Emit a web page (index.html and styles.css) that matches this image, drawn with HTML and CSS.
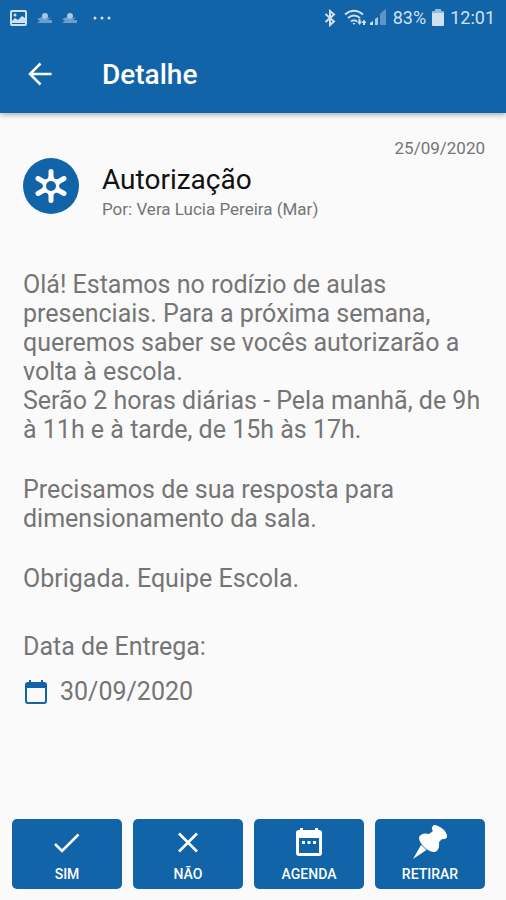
FILE: index.html
```
<!DOCTYPE html>
<html lang="pt-BR">
<head>
    <meta charset="UTF-8">
    <meta name="viewport" content="width=device-width, initial-scale=1.0">
    <title>Detalhe</title>
    <link rel="stylesheet" href="styles.css">
</head>
<body>
    <header class="topbar">
        <div class="status">
            <div class="status-left">
                <svg width="18" height="16" viewBox="0 0 18 16">
                    <rect x="1" y="1" width="15" height="14" rx="1" fill="none" stroke="currentColor" stroke-width="2"/>
                    <circle cx="5" cy="5" r="1.5" fill="currentColor"/>
                    <path d="M2 13V11L5 8L8 10L12 6L15 8V13Z" fill="currentColor"/>
                </svg>
                <svg class="dim" width="17" height="12" viewBox="0 0 17 12">
                    <circle cx="9" cy="4" r="3" fill="currentColor"/>
                    <path d="M1 7L6 5L9 7L15 5L12 8H16V11H1L4 9Z" fill="currentColor" opacity="0.6"/>
                </svg>
                <svg class="dim" width="17" height="12" viewBox="0 0 17 12">
                    <circle cx="9" cy="4" r="3" fill="currentColor"/>
                    <path d="M1 7L6 5L9 7L15 5L12 8H16V11H1L4 9Z" fill="currentColor" opacity="0.6"/>
                </svg>
                <svg class="more" width="18" height="4" viewBox="0 0 18 4" fill="currentColor">
                    <circle cx="2" cy="2" r="1.5"/>
                    <circle cx="9" cy="2" r="1.5"/>
                    <circle cx="16" cy="2" r="1.5"/>
                </svg>
            </div>
            <div class="status-right">
                <svg width="12" height="18" viewBox="0 0 12 18" fill="none" stroke="currentColor" stroke-width="2">
                    <path d="M1.500 5L10 12.500L6 16V2L10 5.500L1.500 13"/>
                </svg>
                <svg class="wifi" width="23" height="18" viewBox="0 0 23 18" fill="none" stroke="currentColor" stroke-width="2">
                    <path d="M1 5.500Q10 -2 19 5.500"/>
                    <path d="M4 9Q10 4 16 9"/>
                    <path d="M7 12.500Q10 10 13 12.500"/>
                    <path d="M8.500 14H11.500L10 16Z" fill="currentColor" stroke="none"/>
                    <path d="M15.500 10V13M20 16V13" stroke-width="2"/>
                    <path d="M13 12.500H18L15.500 16ZM17.500 14L20 10.500L22.500 14Z" fill="currentColor" stroke="none"/>
                </svg>
                <svg width="18" height="17" viewBox="0 0 18 17" fill="currentColor">
                    <path d="M1 16V14L4 12V16Z"/>
                    <path d="M6 16V10L9 8V16Z" opacity="0.8"/>
                    <path d="M11 16V5L13 3V16ZM13 16V3L17 0V16Z" opacity="0.4"/>
                </svg>
                <span class="charge">83%</span>
                <svg class="battery" width="12" height="17" viewBox="0 0 12 17" fill="currentColor">
                    <path d="M3 0H9V2H11Q12 2 12 3V4H0V3Q0 2 1 2H3Z" opacity="0.7"/>
                    <path d="M0 4H12V16Q12 17 11 17H1Q0 17 0 16Z"/>
                </svg>
                <span class="clock">12:01</span>
            </div>
        </div>
        <div class="title-row">
            <button type="button" class="back" aria-label="Voltar">
                <svg width="24" height="24" viewBox="0 0 24 24" fill="none" stroke="currentColor" stroke-width="2.5">
                    <path d="M12.500 1.500L2 12L12.500 22.500M2 12H23.500"/>
                </svg>
            </button>
            <h1>Detalhe</h1>
        </div>
    </header>

    <main class="content">
        <time class="date" datetime="2020-09-25">25/09/2020</time>
        <div class="sender">
            <div class="avatar">
                <svg width="34" height="36" viewBox="-17 -18 34 36">
                    <g stroke="currentColor" stroke-width="5" stroke-linecap="round">
                        <path d="M0 -14.500V14.500M-13 -7.500L13 7.500M-13 7.500L13 -7.500"/>
                    </g>
                    <path d="M0 -12L4 -7L10 -6L8 0L10 6L4 7L0 12L-4 7L-10 6L-8 0L-10 -6L-4 -7Z" fill="currentColor"/>
                    <circle class="hub" r="5"/>
                </svg>
            </div>
            <div class="sender-text">
                <h2>Autorização</h2>
                <p class="author">Por: Vera Lucia Pereira (Mar)</p>
            </div>
        </div>
        <div class="message">
            <p>Olá! Estamos no rodízio de aulas presenciais. Para a próxima semana, queremos saber se vocês autorizarão a volta à escola.<br>Serão 2 horas diárias - Pela manhã, de 9h à 11h e à tarde, de 15h às 17h.</p>
            <p>Precisamos de sua resposta para dimensionamento da sala.</p>
            <p>Obrigada. Equipe Escola.</p>
        </div>
        <div class="delivery">
            <p>Data de Entrega:</p>
            <div class="delivery-date">
                <svg width="22" height="24" viewBox="0 0 22 24">
                    <rect x="1" y="3" width="20" height="20" rx="2" fill="none" stroke="currentColor" stroke-width="2"/>
                    <path d="M1 3H21V8H1ZM4 0H6V4H4ZM16 0H18V4H16Z" fill="currentColor"/>
                </svg>
                <time datetime="2020-09-30">30/09/2020</time>
            </div>
        </div>
    </main>

    <footer class="actions">
        <button type="button">
            <svg width="34" height="34" viewBox="0 0 34 34" fill="none" stroke="currentColor" stroke-width="2.5">
                <path d="M5 19L12 26L28.500 9.500"/>
            </svg>
            SIM
        </button>
        <button type="button">
            <svg width="34" height="34" viewBox="0 0 34 34" fill="none" stroke="currentColor" stroke-width="2.5">
                <path d="M8 8.500L26 26.500M26 8.500L8 26.500"/>
            </svg>
            NÃO
        </button>
        <button type="button">
            <svg width="34" height="34" viewBox="0 0 34 34">
                <rect x="5.500" y="6.500" width="23" height="23" rx="1.5" fill="none" stroke="currentColor" stroke-width="3"/>
                <path d="M5 6H29V13H5ZM8 3H11V7H8ZM23 3H26V7H23ZM10 16H13V19H10ZM15.500 16H18.500V19H15.500ZM21 16H24V19H21Z" fill="currentColor"/>
            </svg>
            AGENDA
        </button>
        <button type="button">
            <svg width="34" height="34" viewBox="0 0 34 34" fill="currentColor">
                <path d="M19.500 1.500Q21 -1 25 1Q32 4 34 10Q35 15 29 14L26 17Q27 25 22 27Q16 27 11 22Q6 17 6 12Q9 7 16 9L20 6Q18 4 19.500 1.500Z"/>
                <path d="M8 20L13.500 25L0 34Z"/>
            </svg>
            RETIRAR
        </button>
    </footer>
</body>
</html>
```
FILE: styles.css
```
* {
    box-sizing: border-box;
}
body {
    font-family: Roboto, sans-serif;
    background-color: #fafafa;
    color: #757575;
    margin: 0;
    min-height: 100vh;
    display: flex;
    flex-direction: column;
}
h1, h2, p {
    margin: 0;
}
button {
    font-family: inherit;
    color: white;
    border: none;
    cursor: pointer;
}
svg {
    display: block;
    flex: none;
}
.topbar {
    background: #1164a8;
    color: white;
    height: 113px;
    box-shadow: 0 2px 5px rgba(0, 0, 0, 0.3);
}
.status {
    display: flex;
    justify-content: space-between;
    align-items: center;
    height: 35px;
    padding: 0 11px 0 10px;
    color: #cfe0ef;
}
.status-left, .status-right {
    display: flex;
    align-items: center;
}
.status-left {
    gap: 8px;
}
.dim {
    opacity: 0.8;
}
.more {
    margin-left: 7px;
}
.wifi {
    margin: 0 2px 0 8px;
}
.charge, .clock {
    font-size: 18px;
}
.charge {
    margin-left: 6px;
}
.battery {
    margin: 0 6px;
}
.title-row {
    display: flex;
    align-items: center;
    height: 78px;
    padding-left: 28px;
}
.back {
    background: none;
    padding: 0;
    margin-right: 50px;
}
h1 {
    font-size: 28px;
    font-weight: 500;
}
.content {
    padding: 25px 21px 20px 23px;
}
.date {
    display: block;
    text-align: right;
    font-size: 17px;
    line-height: 20px;
}
.sender {
    display: flex;
    align-items: flex-start;
    gap: 23px;
}
.avatar {
    display: flex;
    align-items: center;
    justify-content: center;
    width: 56px;
    height: 56px;
    border-radius: 50%;
    background: #1164a8;
    color: white;
}
.hub {
    fill: #1164a8;
}
.sender-text {
    padding-top: 4px;
}
h2 {
    font-size: 28px;
    font-weight: 400;
    line-height: 36px;
    color: #111;
}
.author {
    font-size: 17px;
    line-height: 22px;
}
.message {
    margin-top: 50px;
    font-size: 25px;
    line-height: 29px;
}
.message p + p {
    margin-top: 31px;
}
.delivery {
    margin-top: 39px;
    font-size: 25px;
    line-height: 29px;
}
.delivery-date {
    display: flex;
    align-items: center;
    gap: 13px;
    margin-top: 16px;
    padding-left: 2px;
}
.delivery-date svg {
    color: #1164a8;
}
.actions {
    display: grid;
    grid-template-columns: repeat(4, 1fr);
    gap: 11px;
    margin-top: auto;
    padding: 0 21px 11px 12px;
}
.actions button {
    display: flex;
    flex-direction: column;
    align-items: center;
    gap: 5px;
    height: 70px;
    padding: 6px 0 0;
    font-size: 14px;
    font-weight: 500;
    line-height: 20px;
    border-radius: 5px;
    background: #1164a8;
}
```
